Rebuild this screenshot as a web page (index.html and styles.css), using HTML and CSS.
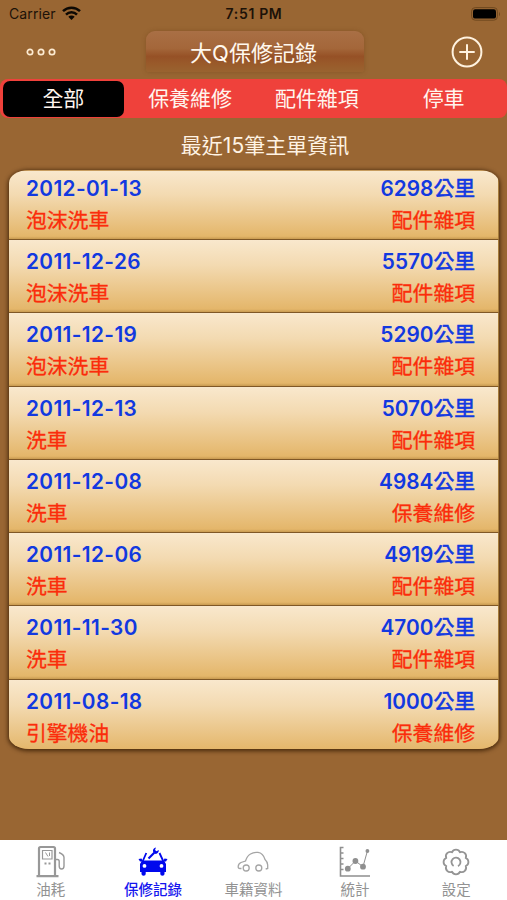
FILE: index.html
```html
<!DOCTYPE html>
<html lang="zh-Hant">
<head>
    <meta charset="UTF-8">
    <meta name="viewport" content="width=device-width, initial-scale=1.0">
    <title>大Q保修記錄</title>
    <link rel="stylesheet" href="styles.css">
</head>
<body>
    <div class="app">
        <!-- Status bar -->
        <div class="status-bar">
            <div class="carrier">
                <span>Carrier</span>
                <svg width="19" height="14" viewBox="0 0 19 14" fill="none" stroke="#0d0904" stroke-width="2.5">
                    <path d="M1 5.2a12.2 12.2 0 0 1 17 0M4 8.6a7.8 7.8 0 0 1 11 0"/>
                    <path d="M9.5 14L6.3 10.8a4.6 4.6 0 0 1 6.4 0z" fill="#0d0904" stroke="none"/>
                </svg>
            </div>
            <span class="time">7:51 PM</span>
            <svg class="battery" width="30" height="14" viewBox="0 0 30 14">
                <rect x=".6" y=".6" width="25.8" height="12.6" rx="3.6" fill="none" stroke="#70491f"/>
                <rect x="2" y="2.2" width="23" height="9.4" rx="2.2" fill="#000"/>
                <path d="M28 4.7q2 2.3 0 4.6z" fill="#70491f"/>
            </svg>
        </div>

        <!-- Navigation -->
        <header class="nav-bar">
            <svg class="more" width="30" height="10" viewBox="0 0 30 10" fill="none" stroke="#fdebd2" stroke-width="1.7">
                <circle cx="4" cy="5" r="2.7"/>
                <circle cx="15" cy="5" r="2.7"/>
                <circle cx="26" cy="5" r="2.7"/>
            </svg>
            <h1 class="title">大Q保修記錄</h1>
            <svg class="add" width="32" height="32" viewBox="0 0 32 32" fill="none" stroke="#fff2df" stroke-width="2">
                <circle cx="16" cy="16" r="14.4"/>
                <path d="M16 8.3v15.4M8.3 16h15.4"/>
            </svg>
        </header>

        <nav class="segments">
            <span class="segment selected">全部</span>
            <span class="segment">保養維修</span>
            <span class="segment">配件雜項</span>
            <span class="segment">停車</span>
        </nav>

        <h2 class="caption">最近15筆主單資訊</h2>

        <!-- Records -->
        <ul class="records" id="records"></ul>

        <!-- Tabs -->
        <footer class="tab-bar">
            <div class="tab">
                <svg width="34" height="34" viewBox="0 0 34 34" fill="none" stroke="#989898" stroke-width="1.5">
                    <path d="M5 31V3.5Q5 2 6.5 2H19.5Q21 2 21 3.5V31M2.5 31.2h22" stroke-width="2.2"/>
                    <path d="M8.5 5.5h9.5v8.5h-9.5z" stroke-width="1.2"/>
                    <path d="M11.5 7.5l2.5 4M15.5 7.5v3.5" stroke-width="1"/>
                    <path d="M10.5 18.5h2M14.5 18.5h2" stroke-width="2"/>
                    <path d="M22 14.5h1.5q1.7 0 1.7 2v4.500q0 3 2.400 3t2.400-3v-8.500q0-3-5-5" stroke-width="1.4"/>
                </svg>
                <span>油耗</span>
            </div>
            <div class="tab active">
                <svg width="34" height="34" viewBox="0 0 34 34" fill="#0008ed">
                    <path fill-rule="evenodd" d="M6 15.5H28l2 3.5V27h-1.5v2q0 1.700-2.100 1.700T24.300 29V27H9.700v2q0 1.700-2.100 1.700T5.500 29V27H4v-8zM8.500 19a1.900 1.900 0 1 0 0 3.800a1.900 1.900 0 1 0 0-3.800zM25.500 19a1.900 1.900 0 1 0 0 3.800a1.900 1.900 0 1 0 0-3.800z"/>
                    <path d="M2.500 14l3-.5 1.500 3H4zM31.500 14l-3-.5-1.500 3h3z"/>
                    <path d="M6.800 16l3.500-8M27.200 16l-3.700-8" fill="none" stroke="#0008ed" stroke-width="1.800"/>
                    <path d="M12.500 13.500l6-6" fill="none" stroke="#0008ed" stroke-width="2.200"/>
                    <path d="M17 6.500q-.5-3.200 3-4l-1 2.500 1.500 1.300 2.300-1.200q.2 3.200-3.300 4z"/>
                </svg>
                <span>保修記錄</span>
            </div>
            <div class="tab">
                <svg width="34" height="34" viewBox="0 0 34 34" fill="none" stroke="#a5a5a5" stroke-width="1.3">
                    <path d="M5.500 23.500H4Q2 23.500 2.200 21.500 2.300 18.800 5 17.500L9.500 16Q11 11 14.500 9 18 7 22 7.400 27 8 29 14.500 31.700 17 31.700 20v3.500l-2 .5"/>
                    <circle cx="10.2" cy="23" r="3"/>
                    <circle cx="22.8" cy="23" r="3"/>
                </svg>
                <span>車籍資料</span>
            </div>
            <div class="tab">
                <svg width="34" height="34" viewBox="0 0 34 34" fill="none" stroke="#8f8f8f" stroke-width="1.6">
                    <path d="M2.500 1.700v29.300h29.500M3 2.500h2.500M3 8h2.500M3 13.500h2.500M3 19h2.500M3 24.500h2.500"/>
                    <path d="M9.800 23.700l7.600-7.700 7.600 5.700L29.400 6" stroke-width="1"/>
                    <g fill="#8f8f8f" stroke="none">
                        <circle cx="9.8" cy="23.7" r="2.9"/>
                        <circle cx="17.4" cy="16" r="2.9"/>
                        <circle cx="25" cy="21.7" r="2.9"/>
                        <circle cx="29.4" cy="6" r="1.9"/>
                    </g>
                </svg>
                <span>統計</span>
            </div>
            <div class="tab">
                <svg width="34" height="34" viewBox="0 0 34 34" fill="none" stroke="#949494" stroke-width="1.8" stroke-linejoin="round">
                    <path d="M13 7.300a4.300 4.300 0 0 1 8 0a4.300 4.300 0 0 1 5.700 5.700a4.300 4.300 0 0 1 0 8a4.300 4.300 0 0 1-5.700 5.700a4.300 4.300 0 0 1-8 0a4.300 4.300 0 0 1-5.700-5.700a4.300 4.300 0 0 1 0-8a4.300 4.300 0 0 1 5.700-5.700z"/>
                    <path d="M14.600 20.900a4.500 4.500 0 1 1 4.400.2"/>
                </svg>
                <span>設定</span>
            </div>
        </footer>
    </div>

    <script>
        const records = [
            { date: "2012-01-13", km: 6298, item: "泡沫洗車", type: "配件雜項" },
            { date: "2011-12-26", km: 5570, item: "泡沫洗車", type: "配件雜項" },
            { date: "2011-12-19", km: 5290, item: "泡沫洗車", type: "配件雜項" },
            { date: "2011-12-13", km: 5070, item: "洗車", type: "配件雜項" },
            { date: "2011-12-08", km: 4984, item: "洗車", type: "保養維修" },
            { date: "2011-12-06", km: 4919, item: "洗車", type: "配件雜項" },
            { date: "2011-11-30", km: 4700, item: "洗車", type: "配件雜項" },
            { date: "2011-08-18", km: 1000, item: "引擎機油", type: "保養維修" }
        ];

        document.getElementById('records').innerHTML = records.map(r => `
            <li class="record">
                <div class="line main"><span class="date">${r.date}</span><span>${r.km}<span class="unit">公里</span></span></div>
                <div class="line detail"><span>${r.item}</span><span>${r.type}</span></div>
            </li>
        `).join('');
    </script>
</body>
</html>
```

FILE: styles.css
```css
* {
    box-sizing: border-box;
}
body {
    margin: 0;
    background: #996633;
    font-family: Inter, 'Noto Sans CJK TC', sans-serif;
}
.app {
    display: flex;
    flex-direction: column;
    width: 507px;
    height: 900px;
    overflow: hidden;
}
svg {
    display: block;
}
.status-bar {
    display: grid;
    grid-template-columns: 1fr auto 1fr;
    align-items: center;
    height: 27px;
    padding: 0 6px 0 9px;
    font-size: 14px;
    color: #1c1208;
}
.carrier {
    display: flex;
    align-items: center;
    gap: 6px;
    letter-spacing: 0.1px;
}
.carrier svg {
    margin-top: -2px;
}
.time {
    margin-right: 2px;
    font-size: 14px;
    font-weight: 600;
    letter-spacing: 0.65px;
}
.battery {
    justify-self: end;
}
.nav-bar {
    display: grid;
    grid-template-columns: 1fr 218px 1fr;
    height: 52px;
    padding: 2px 24px 5px 26px;
    align-items: center;
}
.title {
    height: 41px;
    margin: 0;
    padding-right: 2px;
    border-radius: 9px 9px 3px 3px;
    background: linear-gradient(#a96f45, #a4673a 42%, #965126 62%, #995a2a 80%, #996330);
    box-shadow: 0 0 4px rgba(100, 55, 15, 0.35);
    color: #fff8ee;
    font-size: 22px;
    font-weight: 400;
    line-height: 44px;
    text-align: center;
}
.add {
    justify-self: end;
}
.segments {
    display: grid;
    grid-template-columns: repeat(4, 1fr);
    height: 39px;
    border-radius: 8px;
    background: #ef413b;
}
.segment {
    color: #fff5ee;
    font-size: 21px;
    line-height: 39px;
    text-align: center;
}
.segment.selected {
    margin: 2px 3px;
    border-radius: 7px;
    background: #000;
    line-height: 36px;
}
.caption {
    height: 52px;
    margin: 0;
    padding-left: 23px;
    color: #fff3e4;
    font-size: 21px;
    font-weight: 400;
    line-height: 56px;
    text-align: center;
}
.records {
    height: 579px;
    margin: 0 8px 0 9px;
    padding: 0;
    list-style: none;
    border-radius: 20px / 13px;
    box-shadow: 0 1px 4px 1px rgba(50, 25, 0, 0.8);
    overflow: hidden;
}
.record {
    height: 73.3px;
    padding: 6px 23px 0 17px;
    border-right: 1px solid #a67c3b;
    border-bottom: 1px solid #7f5726;
    background: linear-gradient(#f9e8cd, #f3dab1 35%, #e4b66a 96%, #c89a50);
    font-size: 20.8px;
}
.record:first-child {
    height: 70px;
    padding-top: 2px;
    border-top: 1px solid #c79c5e;
}
.record:last-child {
    border-bottom: 0;
}
.line {
    display: flex;
    justify-content: space-between;
    height: 32px;
    line-height: 32px;
    font-weight: 600;
}
.main {
    color: #1239e0;
}
.date {
    letter-spacing: 0.38px;
}
.unit {
    font-weight: 400;
    -webkit-text-stroke: 0.6px;
}
.detail {
    color: #fb2c0b;
    font-weight: 400;
    -webkit-text-stroke: 0.3px;
}
.tab-bar {
    display: grid;
    grid-template-columns: repeat(5, 1fr);
    height: 60px;
    margin-top: auto;
    background: #fff;
}
.tab {
    display: flex;
    flex-direction: column;
    align-items: center;
    padding-top: 5px;
    color: #929292;
    font-size: 14.5px;
    line-height: 21px;
}
.tab.active {
    padding-left: 2px;
    color: #1515ee;
    font-weight: 500;
}
```
